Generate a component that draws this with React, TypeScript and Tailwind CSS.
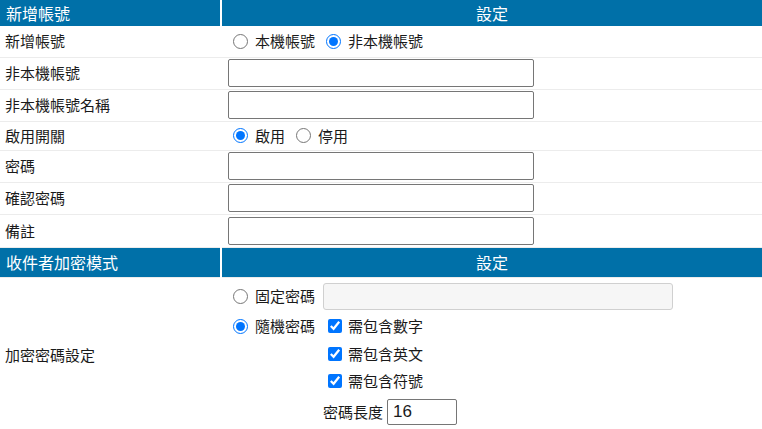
import { useState } from "react"

const font = { fontFamily: '"Noto Sans CJK TC", "Noto Sans", sans-serif' }

function Radio({ name, label, checked, onChange }: { name: string; label: string; checked: boolean; onChange: () => void }) {
  return (
    <label className="flex items-center">
      <input type="radio" name={name} checked={checked} onChange={onChange} className="m-0 h-[15px] w-[15px] accent-[#0075ff]" />
      <span className="ml-[7px]">{label}</span>
    </label>
  )
}

function Check({ label }: { label: string }) {
  const [on, setOn] = useState(true)
  return (
    <label className="flex h-[27.5px] items-center pl-[5px]">
      <input type="checkbox" checked={on} onChange={() => setOn(!on)} className="m-0 h-[14px] w-[14px] accent-[#0075ff]" />
      <span className="ml-[6px]">{label}</span>
    </label>
  )
}

function TextInput({ className = "" }: { className?: string }) {
  return <input type="text" className={`h-[28px] w-[306px] rounded-[2px] border border-[#767676] bg-white px-1 outline-none ${className}`} />
}

function SectionHeader({ title, h }: { title: string; h: string }) {
  return (
    <tr className={`${h} bg-[#0070a8] text-[16px] text-white`}>
      <th className="w-[221px] pl-[6px] text-left font-normal">{title}</th>
      <th className="border-l-2 border-white text-center font-normal">設定</th>
    </tr>
  )
}

export default function App() {
  const [local, setLocal] = useState(false)
  const [enabled, setEnabled] = useState(true)
  const [mode, setMode] = useState("random")

  const inputRows = ["非本機帳號", "非本機帳號名稱"]
  const pwRows = ["密碼", "確認密碼", "備註"]

  return (
    <div className="w-[762px] bg-white text-[15px] leading-[20px] text-[#1a1a1a]" style={font}>
      <table className="w-full border-collapse">
        <tbody>
          <SectionHeader title="新增帳號" h="h-[26px]" />
          <tr className="h-[31px] border-b border-[#ececec]">
            <td className="pl-[5px]">新增帳號</td>
            <td className="pl-[12px]">
              <div className="flex items-center gap-[11px]">
                <Radio name="acct" label="本機帳號" checked={local} onChange={() => setLocal(true)} />
                <Radio name="acct" label="非本機帳號" checked={!local} onChange={() => setLocal(false)} />
              </div>
            </td>
          </tr>
          {inputRows.map((r) => (
            <tr key={r} className="h-[32px] border-b border-[#ececec]">
              <td className="pl-[5px]">{r}</td>
              <td className="pl-[7px]">
                <TextInput />
              </td>
            </tr>
          ))}
          <tr className="h-[29px] border-b border-[#ececec]">
            <td className="pl-[5px]">啟用開關</td>
            <td className="pl-[12px]">
              <div className="flex items-center gap-[11px]">
                <Radio name="en" label="啟用" checked={enabled} onChange={() => setEnabled(true)} />
                <Radio name="en" label="停用" checked={!enabled} onChange={() => setEnabled(false)} />
              </div>
            </td>
          </tr>
          {pwRows.map((r, i) => (
            <tr key={r} className={`${i === 2 ? "h-[33px]" : "h-[32px]"} border-b border-[#ececec]`}>
              <td className="pl-[5px]">{r}</td>
              <td className="pl-[7px]">
                <TextInput />
              </td>
            </tr>
          ))}
          <SectionHeader title="收件者加密模式" h="h-[30px]" />
          <tr className="border-t border-[#ececec]">
            <td className="pl-[5px] align-middle">加密密碼設定</td>
            <td className="pb-[8px] pl-[7px] pt-[5px]">
              <div className="grid grid-cols-[95px_1fr] gap-y-[3px]">
                <div className="flex items-center pl-[5px]">
                  <Radio name="mode" label="固定密碼" checked={mode === "fixed"} onChange={() => setMode("fixed")} />
                </div>
                <input
                  type="text"
                  disabled
                  className="h-[27px] w-[350px] rounded-[3px] border border-[#d0d0d0] bg-[#f6f6f6]"
                />
                <div className="flex h-[27.5px] items-center self-start pl-[5px]">
                  <Radio name="mode" label="隨機密碼" checked={mode === "random"} onChange={() => setMode("random")} />
                </div>
                <div>
                  <Check label="需包含數字" />
                  <Check label="需包含英文" />
                  <Check label="需包含符號" />
                  <div className="mt-[4px] flex items-center">
                    <span>密碼長度</span>
                    <input
                      type="text"
                      defaultValue="16"
                      className="ml-[4px] h-[26px] w-[70px] rounded-[2px] border border-[#767676] pl-[5px] text-[17px] outline-none"
                      style={{ fontFamily: '"Liberation Sans", Arial, sans-serif' }}
                    />
                  </div>
                </div>
              </div>
            </td>
          </tr>
        </tbody>
      </table>
    </div>
  )
}
